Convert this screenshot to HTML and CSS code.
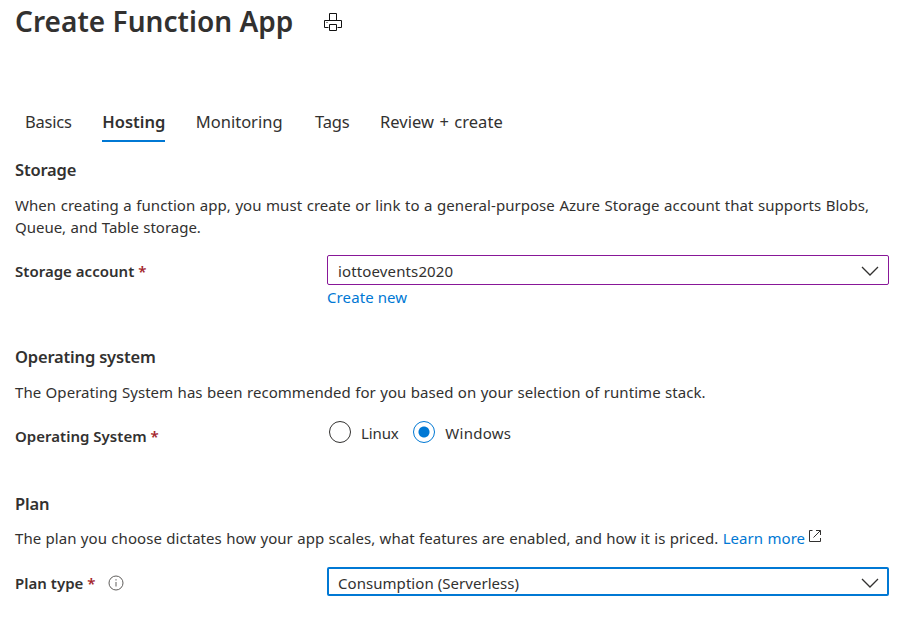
FILE: index.html
```html
<!DOCTYPE html>
<html lang="en">
<head>
<meta charset="utf-8">
<title>Create Function App</title>
<link rel="stylesheet" href="styles.css">
</head>
<body>
<main class="page">
  <header class="header">
    <h1 class="title">Create Function App</h1>
    <svg class="printer" viewBox="0 0 18 18" width="18" height="18"><path d="M5.5 7V.5h7V7M4.500 14.500h-4V7.500h17v7h-4M5.500 11.500h7v6h-7zM2.500 9.500h1"/></svg>
  </header>
  <nav class="tabs">
    <a class="tab">Basics</a>
    <a class="tab active">Hosting</a>
    <a class="tab monitoring">Monitoring</a>
    <a class="tab">Tags</a>
    <a class="tab review">Review + create</a>
  </nav>
  <section class="section storage">
    <h2 class="heading">Storage</h2>
    <p class="text">When creating a function app, you must create or link to a general-purpose Azure Storage account that supports Blobs,<br><span class="last">Queue, and Table storage.</span></p>
    <div class="row">
      <div class="label">Storage account <span class="req">*</span></div>
      <div class="field">
        <div class="select visited">iottoevents2020<svg class="chevron" viewBox="0 0 18 10" width="18" height="10"><path d="M1 1l8 8 8-8"/></svg></div>
        <a class="link create">Create new</a>
      </div>
    </div>
  </section>
  <section class="section system">
    <h2 class="heading">Operating system</h2>
    <p class="text">The Operating System has been recommended for you based on your selection of runtime stack.</p>
    <div class="row">
      <div class="label">Operating System <span class="req">*</span></div>
      <div class="radios">
        <span class="radio"></span><span class="option">Linux</span>
        <span class="radio checked"></span><span class="option">Windows</span>
      </div>
    </div>
  </section>
  <section class="section plan">
    <h2 class="heading">Plan</h2>
    <p class="text">The plan you choose dictates how your app scales, what features are enabled, and how it is priced. <a class="link">Learn more</a><svg class="external" viewBox="0 0 14 14" width="14" height="14"><path d="M4.500 1.500H1.500v11h11V9M8 1.500h4.500V6M12.500 1.500L5.500 8.500"/></svg></p>
    <div class="row">
      <div class="label">Plan type <span class="req">*</span><svg class="info" viewBox="0 0 16 16" width="16" height="16"><circle cx="8" cy="8" r="7"/><path d="M8 7v4.500M8 4.200v1.300"/></svg></div>
      <div class="field">
        <div class="select focused">Consumption (Serverless)<svg class="chevron" viewBox="0 0 18 10" width="18" height="10"><path d="M1 1l8 8 8-8"/></svg></div>
      </div>
    </div>
  </section>
</main>
</body>
</html>
```
FILE: styles.css
```css
* { box-sizing: border-box; }
body { margin: 0; background: #fff; color: #323130; font: 15px/22px "Noto Sans", sans-serif; }
svg { fill: none; stroke: #323130; }
h1, h2, p { margin: 0; }
.page { width: 912px; height: 621px; padding: 0 23px 0 15px; overflow: hidden; }
.header { display: flex; height: 43px; align-items: center; gap: 31px; }
.title { font-size: 28px; line-height: 43px; font-weight: 600; letter-spacing: .04px; white-space: nowrap; }
.printer { stroke: #111; }
.tabs { display: flex; gap: 30.5px; margin: 59px 0 0 10px; height: 40px; font-size: 16.5px; letter-spacing: -.2px; line-height: 40px; white-space: nowrap; }
.tab { height: 40px; }
.active { font-weight: 600; border-bottom: 2px solid #0078d4; letter-spacing: 0; }
.monitoring { letter-spacing: 0; margin-right: 2px; }
.review { letter-spacing: .05px; word-spacing: 1px; }
.heading { font-size: 16.5px; line-height: 24px; font-weight: 600; letter-spacing: -.18px; }
.section { white-space: nowrap; }
.storage { padding-top: 16px; height: 203px; }
.system { height: 147px; }
.plan { height: 130px; }
.text { margin-top: 12px; letter-spacing: .05px; word-spacing: .57px; }
.last { letter-spacing: -.02px; }
.system .text { word-spacing: .43px; }
.plan .text { margin-top: 11px; word-spacing: .38px; }
.row { display: flex; margin-top: 17px; }
.plan .row { margin-top: 18px; }
.label { width: 312px; font-weight: 600; line-height: 32px; letter-spacing: .02px; }
.req { color: #a4262c; }
.field { width: 562px; }
.select { height: 30px; display: flex; align-items: center; justify-content: space-between; padding: 2px 9px 0 10px; border: 1px solid #881798; border-radius: 2px; letter-spacing: .13px; }
.focused { height: 29px; border: 2px solid #0078d4; padding: 2px 8px 0 9px; letter-spacing: .05px; }
.chevron { stroke-width: 1.300; }
.link { color: #0078d4; }
.create { display: block; margin-top: 1px; letter-spacing: .1px; }
.radios { display: flex; align-items: center; height: 26px; }
.radio { width: 22px; height: 22px; border: 1px solid #323130; border-radius: 50%; margin: -2px 10px 0 2px; }
.checked { border-color: #0078d4; background: radial-gradient(circle, #0078d4 5px, #fff 6px); margin-left: 14px; }
.option:last-child { letter-spacing: .25px; margin-left: .6px; }
.option:nth-child(2) { letter-spacing: -.1px; }
.external { margin-left: 3px; vertical-align: 1px; }
.info { margin-left: 12px; vertical-align: -2px; stroke: #605e5c; }
```
